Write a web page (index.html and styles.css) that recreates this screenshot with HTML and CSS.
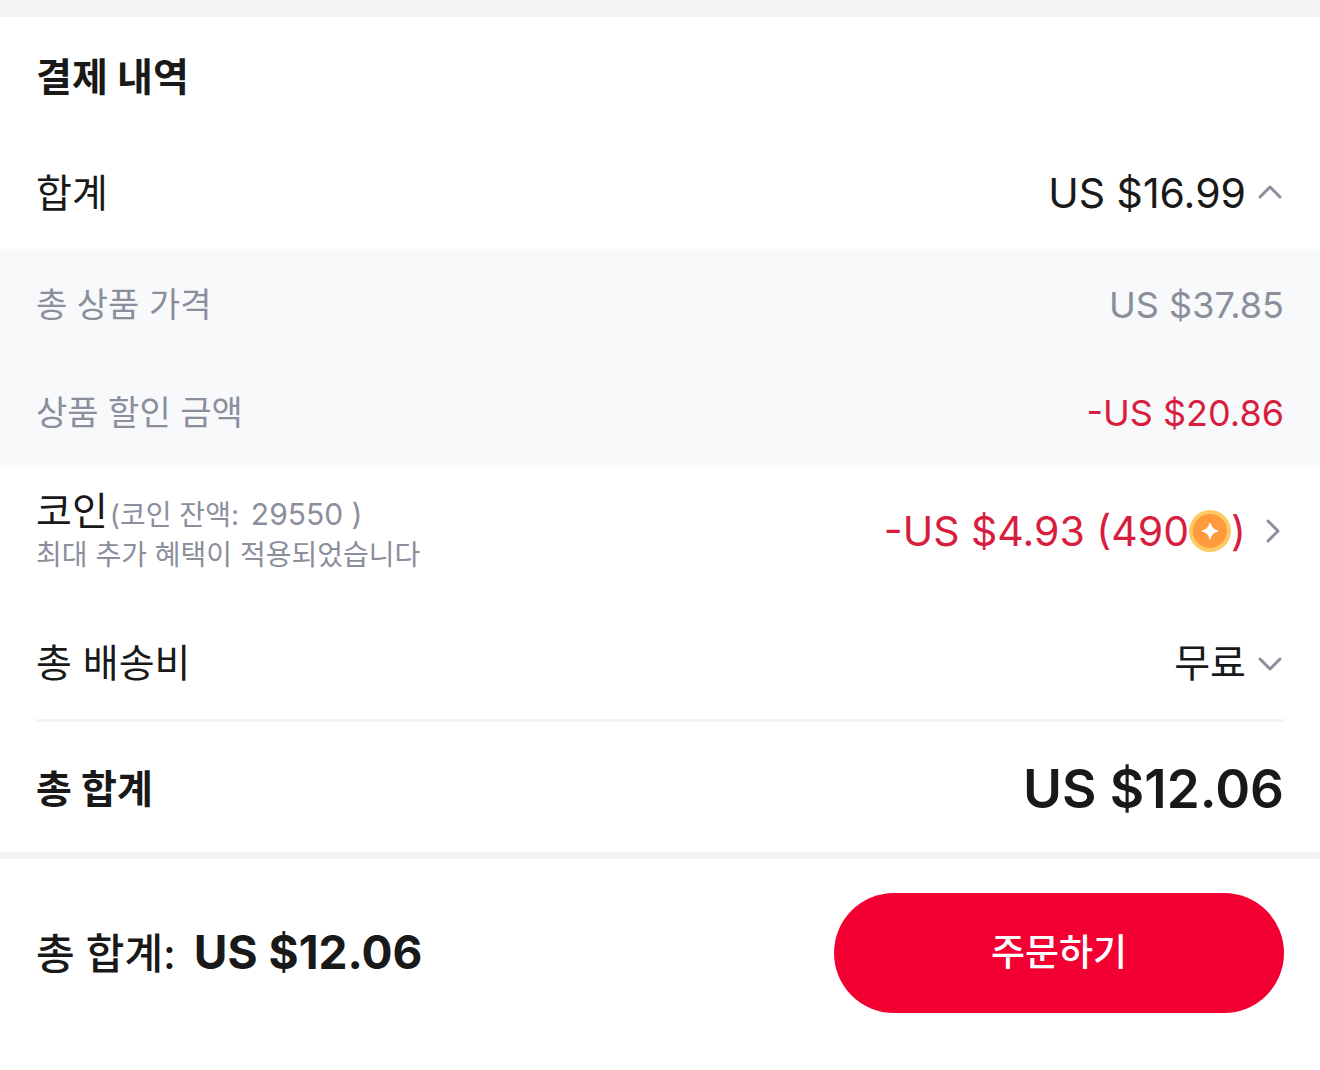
FILE: index.html
```html
<!DOCTYPE html>
<html lang="ko">
<head>
  <meta charset="UTF-8">
  <title>결제 내역</title>
  <meta name="viewport" content="width=device-width, initial-scale=1.0">
  <link rel="stylesheet" href="styles.css">
</head>
<body>
  <main class="summary">
    <h1>결제 내역</h1>

    <div class="row">
      <span>합계</span>
      <button type="button" class="toggle" aria-expanded="true">
        <span class="amount">US $16.99</span>
        <svg class="chevron" viewBox="0 0 26 24"><path d="M2 16 L12 6 L22 16"/></svg>
      </button>
    </div>

    <div class="details">
      <div class="row sub">
        <span>총 상품 가격</span>
        <span class="amount">US $37.85</span>
      </div>
      <div class="row sub">
        <span>상품 할인 금액</span>
        <span class="amount discount">-US $20.86</span>
      </div>
    </div>

    <div class="row coins">
      <div>
        <div class="coin-label">코인<span class="balance">(코인 잔액: <span class="number">29550 )</span></span></div>
        <div class="note">최대 추가 혜택이 적용되었습니다</div>
      </div>
      <button type="button" class="toggle">
        <span class="amount discount coin-amount">-US $4.93 (490<svg class="coin" viewBox="0 0 42 42">
          <circle cx="21" cy="21" r="21" fill="#fccb64"/>
          <circle cx="21" cy="21" r="17" fill="#ff9a3d"/>
          <path d="M21 13 Q22.5 19.5 29 21 Q22.5 22.5 21 29 Q19.5 22.5 13 21 Q19.5 19.5 21 13Z" fill="#fff" stroke="#fff" stroke-linejoin="round"/>
        </svg>)</span>
        <svg class="chevron" viewBox="0 0 26 24"><path d="M10 2 L20 12 L10 22"/></svg>
      </button>
    </div>

    <div class="row">
      <span>총 배송비</span>
      <button type="button" class="toggle" aria-expanded="false">
        <span>무료</span>
        <svg class="chevron" viewBox="0 0 26 24"><path d="M2 8 L12 18 L22 8"/></svg>
      </button>
    </div>

    <div class="row total">
      <span>총 합계</span>
      <span class="amount">US $12.06</span>
    </div>
  </main>

  <footer class="checkout">
    <div class="checkout-total">
      <span>총 합계:</span>
      <span class="amount">US $12.06</span>
    </div>
    <button type="button" class="order">주문하기</button>
  </footer>
</body>
</html>
```

FILE: styles.css
```css
:root {
  --text: #191919;
  --muted: #8b8e9b;
  --red: #d81e3f;
  --line: #f4f4f4;
  --side: 36px;
}

* {
  box-sizing: border-box;
}

body {
  margin: 0;
  background: #fff;
  color: var(--text);
  font-family: Inter, "Noto Sans CJK KR", sans-serif;
  font-size: 39px;
  line-height: 48px;
}

button {
  padding: 0;
  border: none;
  background: none;
  color: inherit;
  font: inherit;
  cursor: pointer;
}

.summary {
  border-top: 17px solid var(--line);
  border-bottom: 7px solid var(--line);
}

h1 {
  margin: 0;
  padding: 36px var(--side);
  font-size: 39px;
  font-weight: 700;
}

.row {
  display: flex;
  align-items: center;
  justify-content: space-between;
  min-height: 112px;
  padding: 0 var(--side);
}

.amount {
  font-size: 41px;
}

.discount {
  color: var(--red);
}

.toggle {
  display: flex;
  align-items: center;
  gap: 12px;
}

.chevron {
  width: 26px;
  height: 24px;
  fill: none;
  stroke: var(--muted);
  stroke-width: 3;
  stroke-linecap: round;
  stroke-linejoin: round;
}

.details {
  background: #f8f9fb;
  color: var(--muted);
}

.sub {
  min-height: 108px;
  padding-top: 4px;
  font-size: 34px;
}

.sub .amount {
  font-size: 36px;
}

.coins {
  padding-top: 22px;
  padding-bottom: 32px;
}

.coin-label {
  height: 48px;
}

.balance,
.note {
  color: var(--muted);
  font-size: 28px;
}

.balance {
  margin-left: 2px;
}

.balance,
.number {
  line-height: 1;
}

.note {
  line-height: 40px;
}

.number {
  margin-left: 4px;
  font-size: 30px;
}

.coin-amount {
  display: flex;
  align-items: center;
}

.coin {
  width: 42px;
  height: 42px;
}

.total {
  min-height: 133px;
  margin: 0 var(--side);
  padding: 4px 0 0;
  border-top: 3px solid var(--line);
  font-weight: 700;
}

.total .amount {
  font-size: 53px;
  font-weight: 600;
}

.checkout {
  display: flex;
  align-items: center;
  justify-content: space-between;
  padding: 34px var(--side);
}

.checkout-total {
  display: flex;
  align-items: baseline;
  gap: 18px;
  font-size: 42px;
  font-weight: 500;
}

.checkout-total .amount {
  font-size: 46px;
  font-weight: 700;
}

.order {
  flex: 0 1 450px;
  height: 120px;
  border-radius: 60px;
  background: #f20032;
  color: #fff;
  font-size: 37px;
  font-weight: 500;
}
```
